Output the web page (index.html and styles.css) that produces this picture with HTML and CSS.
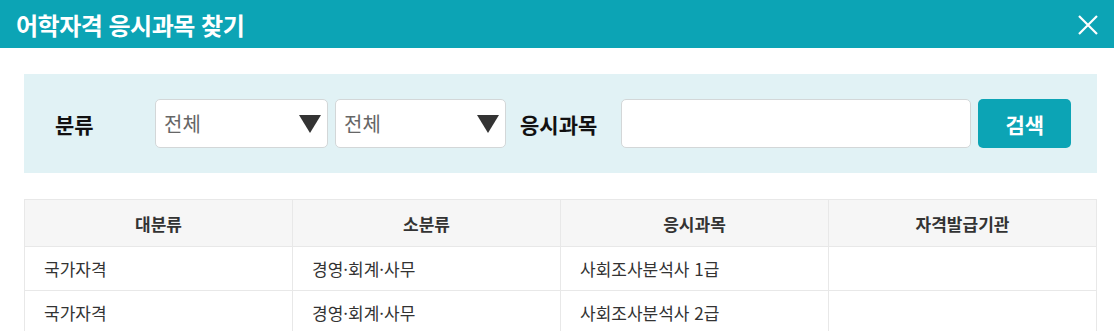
FILE: index.html
```html
<!DOCTYPE html>
<html lang="ko">
<head>
<meta charset="utf-8">
<link rel="stylesheet" href="styles.css">
</head>
<body>
<div class="modal">
  <div class="modal-head">
    <h1 class="modal-title">어학자격 응시과목 찾기</h1>
    <button class="close-btn" aria-label="닫기">
      <svg width="20" height="20" viewBox="0 0 20 20"><path d="M1 1 L19 19 M19 1 L1 19" stroke="#fff" stroke-width="2.2" fill="none"/></svg>
    </button>
  </div>
  <div class="modal-body">
    <div class="search-box">
      <span class="label label-cat">분류</span>
      <div class="select sel1"><span>전체</span><span class="tri"></span></div>
      <div class="select sel2"><span>전체</span><span class="tri"></span></div>
      <span class="label label-subj">응시과목</span>
      <input class="text-input" type="text">
      <button class="search-btn">검색</button>
    </div>
    <table class="result">
      <thead>
        <tr><th>대분류</th><th>소분류</th><th>응시과목</th><th>자격발급기관</th></tr>
      </thead>
      <tbody>
        <tr><td>국가자격</td><td>경영·회계·사무</td><td>사회조사분석사 1급</td><td></td></tr>
        <tr><td>국가자격</td><td>경영·회계·사무</td><td>사회조사분석사 2급</td><td></td></tr>
      </tbody>
    </table>
  </div>
</div>
</body>
</html>
```
FILE: styles.css
```css
* { box-sizing: border-box; }
html, body { margin: 0; padding: 0; background: #fff; }
body { font-family: "Noto Sans CJK KR", "Noto Sans", sans-serif; color: #222; }
.modal-head {
  height: 48px;
  background: #0ca4b5;
  display: flex;
  align-items: center;
  justify-content: space-between;
  padding: 0 16px 0 16px;
}
.modal-title {
  margin: 0;
  color: #fff;
  font-size: 24px;
  font-weight: 700;
  letter-spacing: -0.5px;
}
.close-btn {
  background: none;
  border: 0;
  padding: 0;
  width: 20px;
  height: 20px;
  display: flex;
  margin-top: 1px;
}
.modal-body { padding: 26px 17px 0 24px; }
.search-box {
  background: #e1f2f5;
  height: 99px;
  display: flex;
  align-items: center;
  padding-left: 31px;
}
.label {
  font-size: 21px;
  font-weight: 700;
  color: #111;
}
.label-cat { width: 100px; }
.label-subj { margin: 0 24px 0 14px; }
.select {
  height: 49px;
  background: #fff;
  border: 1px solid #d3d7d8;
  border-radius: 5px;
  display: flex;
  align-items: center;
  justify-content: space-between;
  padding: 0 6px 0 8px;
  font-size: 20px;
  color: #666;
}
.sel1 { width: 173px; margin-right: 7px; }
.sel2 { width: 171px; }
.tri {
  width: 0; height: 0;
  border-left: 11px solid transparent;
  border-right: 11px solid transparent;
  border-top: 18px solid #333;
}
.text-input {
  width: 350px;
  height: 49px;
  border: 1px solid #d3d7d8;
  border-radius: 5px;
  background: #fff;
  margin-right: 7px;
}
.search-btn {
  width: 93px;
  height: 49px;
  border: 0;
  border-radius: 5px;
  background: #0ca4b5;
  color: #fff;
  font-family: inherit;
  font-size: 21px;
  font-weight: 700;
  padding: 0;
}
.result {
  margin-top: 26px;
  width: 100%;
  border-collapse: collapse;
  table-layout: fixed;
  font-size: 17px;
  color: #333;
}
.result th, .result td { border: 1px solid #e8e8e8; }
.result th {
  height: 47px;
  background: #f6f6f6;
  font-weight: 700;
  text-align: center;
  color: #333;
}
.result td {
  height: 44px;
  padding: 0 19px;
  text-align: left;
}
```
